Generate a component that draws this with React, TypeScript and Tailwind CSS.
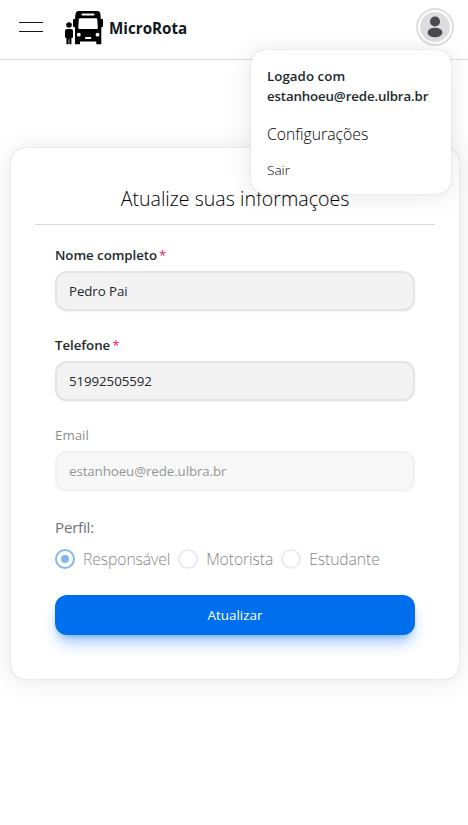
import { ReactNode } from 'react';

const mediumShadow =
  'shadow-[0px_0px_15px_0px_rgba(0,0,0,0.03),0px_2px_30px_0px_rgba(0,0,0,0.08),0px_0px_1px_0px_rgba(0,0,0,0.3)]';

function BusLogo() {
  return (
    <svg width="40" height="36" viewBox="0 0 40 36" fill="#000">
      <circle cx="5" cy="15" r="2.8" />
      <path d="M3.2 19H6.9Q9 19 9 21V27.2Q9 28 7.4 28V34.2H5.3V29H4.7V34.2H2.4V28Q1 28 1 27.2V21Q1 19 3.2 19Z" />
      <path
        fillRule="evenodd"
        d="M14.5 1H33.5Q36 1 36.4 4L36.8 9H38Q39 9 39 10V16Q39 17.2 37.3 17.2V34.2H32.3V31.5H16V34.2H11V17.2Q9 17.2 9 16V10Q9 9 10.4 9H11L11.5 4Q12 1 14.5 1ZM18.3 3.6Q17.6 3.6 17.6 4.6Q17.6 5.6 18.3 5.6H29.7Q30.4 5.6 30.4 4.6Q30.4 3.6 29.7 3.6ZM16 8.2Q15 8.2 14.8 9.3L14.3 18Q14.3 19 15.3 19H33Q33.9 19 33.8 18L33.3 9.3Q33.1 8.2 32.2 8.2ZM14.8 22.7A1.95 1.95 0 1 0 14.8 26.6A1.95 1.95 0 1 0 14.8 22.7ZM33.5 22.7A1.95 1.95 0 1 0 33.5 26.6A1.95 1.95 0 1 0 33.5 22.7ZM21.2 27V29H27.2V27Z"
      />
    </svg>
  );
}

function Field({ label, value, required, disabled }: { label: string; value: string; required?: boolean; disabled?: boolean }) {
  return (
    <div className={`flex flex-col ${disabled ? 'opacity-50' : ''}`}>
      <label className={`h-[26px] text-[13.3px] leading-5 ${disabled ? 'font-medium' : 'font-semibold tracking-[-0.05px] text-[#22292d]'}`}>
        {label}
        {required && <span className="ml-0.5 font-normal text-[#f31260]">*</span>}
      </label>
      <div className="flex h-10 items-center rounded-xl border-2 border-[#e4e4e4] bg-[#f3f3f3] px-3 pt-px text-[13.3px] tracking-[-0.08px] text-[#22292d] shadow-[0_1px_2px_rgba(0,0,0,0.05)]">
        {value}
      </div>
    </div>
  );
}

function Radio({ checked, children }: { checked?: boolean; children: ReactNode }) {
  return (
    <div className="flex items-center opacity-50">
      <span className={`mr-2 flex size-5 items-center justify-center rounded-full border-2 ${checked ? 'border-[#006fee]' : 'border-[#d9d9de]'}`}>
        {checked && <span className="size-2 rounded-full bg-[#006fee]" />}
      </span>
      <span className="text-[15.7px] leading-6 font-light tracking-[-0.08px] text-black">{children}</span>
    </div>
  );
}

export default function App() {
  return (
    <div className="relative h-[825px] w-[468px] overflow-hidden bg-white font-['Open_Sans','Noto_Sans',sans-serif] text-[#11181c]">
      <header className="flex h-[60px] items-center border-b border-[#dcdcdc] pr-[14px] pl-[19px]">
        <button className="flex w-6 flex-col gap-2 pb-[5px]">
          <span className="h-px bg-[#11181c]" />
          <span className="h-px bg-[#11181c]" />
        </button>
        <div className="flex items-center pb-[3px] pl-[21px]">
          <BusLogo />
          <span className="pl-[5px] text-[15.2px] font-bold">MicroRota</span>
        </div>
        <div className="mb-[5px] ml-auto rounded-full border-2 border-[#dedee2] p-0.5">
          <div className="flex size-[30px] items-center justify-center rounded-full bg-[#dddde0]">
            <svg width="18" height="24" viewBox="0 0 18 24" fill="#4b4b4b">
              <circle cx="9" cy="6.5" r="5" />
              <ellipse cx="9" cy="17.5" rx="7.4" ry="4.8" />
            </svg>
          </div>
        </div>
      </header>

      <main className={`mt-[88px] ml-[11px] h-[531px] w-[448px] rounded-[14px] bg-white px-6 ${mediumShadow}`}>
        <h1 className="flex h-[77px] items-end justify-center border-b border-[#d9d9dc] pb-[11px] text-[19.6px] leading-7 font-light text-black">
          Atualize suas informações
        </h1>
        <form className="flex flex-col px-5 pt-5">
          <div className="flex flex-col gap-6">
            <Field label="Nome completo" value="Pedro Pai" required />
            <Field label="Telefone" value="51992505592" required />
            <Field label="Email" value="estanhoeu@rede.ulbra.br" disabled />
          </div>
          <p className="pt-6 text-[15.2px] leading-6 tracking-[-0.25px] text-[#71717a]">Perfil:</p>
          <div className="mt-2 flex gap-2">
            <Radio checked>Responsável</Radio>
            <Radio>Motorista</Radio>
            <Radio>Estudante</Radio>
          </div>
          <button
            type="button"
            className="mt-6 h-10 rounded-xl bg-[#006fee] text-[13.4px] font-medium text-white shadow-[0_10px_15px_-3px_rgba(0,111,238,0.4),0_4px_6px_-4px_rgba(0,111,238,0.4)]"
          >
            Atualizar
          </button>
        </form>
      </main>

      <div className={`absolute top-[50px] left-[251px] h-36 w-[200px] rounded-[14px] bg-white px-4 pt-4 ${mediumShadow}`}>
        <p className="text-[13.3px] leading-5 font-semibold tracking-[0.05px] text-[#22292d]">Logado com</p>
        <p className="text-[13.3px] leading-5 font-semibold tracking-[-0.15px] text-[#22292d]">estanhoeu@rede.ulbra.br</p>
        <p className="mt-4 text-[15.75px] leading-6 font-light text-black">Configurações</p>
        <p className="mt-[14px] text-[13.6px] leading-5 font-light text-black">Sair</p>
      </div>
    </div>
  );
}
